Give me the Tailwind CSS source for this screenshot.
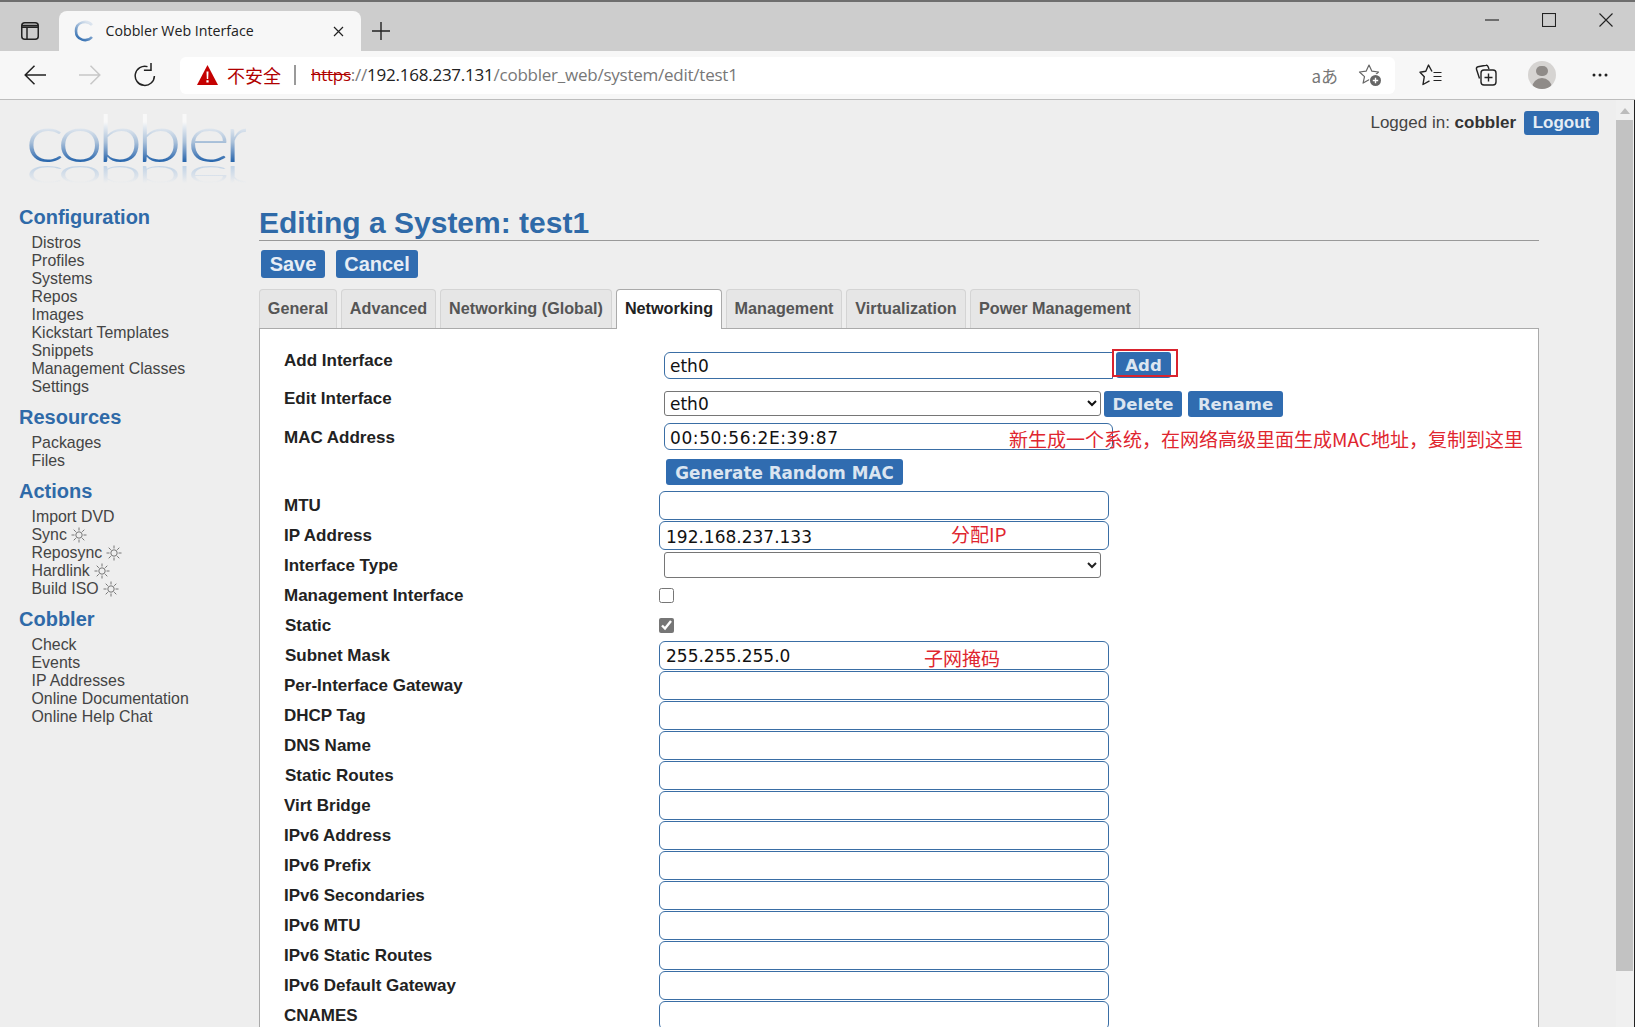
<!DOCTYPE html>
<html lang="en">
<head>
<meta charset="utf-8">
<title>Cobbler Web Interface</title>
<script src="https://cdn.jsdelivr.net/npm/@tailwindcss/browser@4"></script>
</head>
<body class="m-0 overflow-hidden font-['Liberation_Sans',sans-serif]">
<div class="relative flex h-[1027px] w-[1635px] flex-col overflow-hidden bg-[#eeeeee]">

  <!-- tab strip -->
  <div class="flex h-[51px] shrink-0 items-end border-t-2 border-[#6e6e6e] bg-[#cdcdcd] pl-[20px]">
    <div class="flex h-[40px] w-[38.5px] items-start pt-[10px]">
      <svg width="20" height="20" viewBox="0 0 20 20" fill="none" stroke="#222" stroke-width="1.5"><rect x="1.75" y="1.75" width="16.5" height="16.5" rx="3"/><path d="M2 4.5h16M2 6.2h16" stroke-width="1.6"/><path d="M7 6v12"/></svg>
    </div>
    <div class="flex h-[40px] w-[302px] items-center rounded-t-[8px] bg-[#f7f7f7] pl-[14px] pr-[17px] font-['Open_Sans',sans-serif] text-[14.200px] text-[#222]">
      <svg class="mr-[11px]" width="22" height="22" viewBox="0 0 22 22" fill="none"><defs><linearGradient id="fav" x1="0.7" y1="0" x2="0.2" y2="1"><stop offset="0" stop-color="#dbe4ee"/><stop offset="1" stop-color="#2f6cb0"/></linearGradient></defs><path d="M19 5C14 -0.5 3 1.500 3 11s11 11.500 16 6" stroke="url(#fav)" stroke-width="2.600"/></svg>
      <span class="flex-1 truncate">Cobbler Web Interface</span>
      <svg width="11" height="11" viewBox="0 0 11 11" stroke="#222" stroke-width="1.2"><path d="M1 1l9 9M10 1l-9 9"/></svg>
    </div>
    <div class="flex h-[40px] w-[40px] items-center justify-center pb-[1px]">
      <svg width="18" height="18" viewBox="0 0 18 18" stroke="#222" stroke-width="1.4"><path d="M9 0v18M0 9h18"/></svg>
    </div>
    <div class="flex h-[49px] flex-1 items-start justify-end self-start">
      <div class="flex h-[36px] w-[57px] items-center justify-center"><svg width="14" height="14" viewBox="0 0 14 14" stroke="#222" stroke-width="1.1"><path d="M0 7h14"/></svg></div>
      <div class="flex h-[36px] w-[57px] items-center justify-center"><svg width="14" height="14" viewBox="0 0 14 14" fill="none" stroke="#222" stroke-width="1.1"><rect x=".5" y=".5" width="13" height="13"/></svg></div>
      <div class="flex h-[36px] w-[58px] items-center justify-center"><svg width="14" height="14" viewBox="0 0 14 14" stroke="#222" stroke-width="1.1"><path d="M.5.5l13 13M13.5.5l-13 13"/></svg></div>
    </div>
  </div>

  <!-- toolbar -->
  <div class="flex h-[49px] shrink-0 items-center border-b border-[#bdbdbd] bg-[#f7f7f7]">
    <div class="flex w-[180px] items-center pl-[24px]">
      <svg class="mr-[33px]" width="22" height="20" viewBox="0 0 22 20" fill="none" stroke="#222" stroke-width="1.5"><path d="M22 10H1.2M10.5 .8L1.2 10l9.3 9.2"/></svg>
      <svg class="mr-[33px]" width="22" height="20" viewBox="0 0 22 20" fill="none" stroke="#c8c8c8" stroke-width="1.5"><path d="M0 10h20.8M11.5 .8l9.3 9.2-9.3 9.2"/></svg>
      <svg width="22" height="24" viewBox="0 0 22 24" fill="none" stroke="#222" stroke-width="1.5"><path d="M13.500 3.600A9.600 9.600 0 1 0 20.400 13"/><path d="M17 -.2v7.500H9.900"/></svg>
    </div>
    <div class="flex h-[37px] w-[1215px] items-center rounded-[6px] bg-white pl-[17px] pr-[13px]">
      <svg width="21" height="20" viewBox="0 0 21 20"><path d="M10.500 0L21 20H0z" fill="#c40000"/><path d="M9.500 6.500h2l-.3 7.500h-1.400zM9.400 15.300h2.200v2.200H9.400z" fill="#fff"/></svg>
      <span class="ml-[9px] font-['Noto_Sans_CJK_SC',sans-serif] text-[18px] text-[#b00000]">不安全</span>
      <span class="ml-[13px] h-[20px] w-[2px] bg-[#9a9a9a]"></span>
      <span class="ml-[15px] whitespace-nowrap font-['Open_Sans',sans-serif] text-[17px] tracking-[-0.24px] text-[#777]"><span class="text-[#b00000] line-through">https</span>://<span class="text-[#222]">192.168.237.131</span>/cobbler_web/system/edit/test1</span>
      <span class="flex-1"></span>
      <span class="mr-[20px] font-['Noto_Sans_CJK_SC',sans-serif] text-[17px] leading-none text-[#777]">aあ</span>
      <svg width="24" height="24" viewBox="0 0 24 24" fill="none"><path d="M11 2l2.900 6.200 6.600.8-5 4.600 1.400 6.500L11 16.800l-5.900 3.300 1.400-6.500L1.500 9l6.600-.8z" stroke="#666" stroke-width="1.200" stroke-linejoin="round"/><circle cx="17.500" cy="17.500" r="6.500" fill="#fff"/><circle cx="17.500" cy="17.500" r="5.500" fill="#666"/><path d="M17.500 14.800v5.400M14.800 17.500h5.400" stroke="#fff" stroke-width="1.400"/></svg>
    </div>
    <div class="flex flex-1 items-center pl-[24px]">
      <svg class="mr-[31px]" width="24" height="24" viewBox="0 0 24 24" fill="none" stroke="#222" stroke-width="1.400" stroke-linejoin="round"><path d="M13 8.500L9.500 2 6.800 8.300 1 9.200l4.300 4.500L4 21.500l6.500-3.600"/><path d="M14.500 9.500h8M14.500 13.500h8M14.500 17.500h8" stroke-width="1.200"/></svg>
      <svg class="mr-[30px]" width="24" height="24" viewBox="0 0 24 24" fill="none" stroke="#222" stroke-width="1.400"><path d="M15 6l-1-2.500Q13.400 2 12 2.300L4 3.800Q2 4.300 2.500 6.300L5.500 15.500"/><rect x="7" y="7" width="15" height="15" rx="3"/><path d="M14.500 10.500v8M10.500 14.500h8"/></svg>
      <div class="mr-[36px] flex h-[28px] w-[28px] flex-col items-center overflow-hidden rounded-full bg-[#d6d4d2]">
        <span class="mt-[5px] h-[12px] w-[12px] rounded-full bg-[#8f8b88]"></span>
        <span class="mt-[2px] h-[14px] w-[20px] rounded-t-full bg-[#8f8b88]"></span>
      </div>
      <svg width="16" height="4" viewBox="0 0 16 4" fill="#222"><circle cx="2" cy="2" r="1.500"/><circle cx="8" cy="2" r="1.500"/><circle cx="14" cy="2" r="1.500"/></svg>
    </div>
  </div>

  <!-- page -->
  <div class="flex min-h-0 flex-1">
    <aside class="w-[259px] shrink-0 text-[15.900px] leading-[18px] text-[#444]">
      <div class="relative h-[105px] overflow-hidden">
        <div class="absolute left-[25px] top-[-3px] origin-top-left scale-x-[1.25] whitespace-nowrap bg-linear-to-t from-[#2a68ad] from-18% via-[#a9c0d9] via-42% to-[#f8f8f8] to-68% bg-clip-text font-['Lato',sans-serif] text-[67px] font-light leading-[78px] tracking-[-5.500px] text-transparent">cobbler</div>
        <div class="absolute left-[25px] top-[98px] origin-top-left scale-x-[1.25] scale-y-[-0.5] whitespace-nowrap bg-linear-to-t from-[#c3d4e6] from-20% to-[#eeeeee] to-62% bg-clip-text font-['Lato',sans-serif] text-[67px] font-light leading-[78px] tracking-[-5.500px] text-transparent">cobbler</div>
      </div>
      <div class="pl-[19px]">
        <h2 class="mb-[5px] text-[20px] font-bold leading-[24px] text-[#2f6aa8]">Configuration</h2>
        <ul class="pl-[12.500px]">
          <li>Distros</li><li>Profiles</li><li>Systems</li><li>Repos</li><li>Images</li><li>Kickstart Templates</li><li>Snippets</li><li>Management Classes</li><li>Settings</li>
        </ul>
        <h2 class="mb-[5px] mt-[9px] text-[20px] font-bold leading-[24px] text-[#2f6aa8]">Resources</h2>
        <ul class="pl-[12.500px]"><li>Packages</li><li>Files</li></ul>
        <h2 class="mb-[5px] mt-[9px] text-[20px] font-bold leading-[24px] text-[#2f6aa8]">Actions</h2>
        <ul class="pl-[12.500px]">
          <li>Import DVD</li>
          <li class="flex items-center gap-[4px]">Sync <svg width="16" height="16" viewBox="0 0 16 16" fill="none" stroke="#666" stroke-width=".9"><circle cx="8" cy="8" r="3.200"/><path d="M8 .5v3M8 12.500v3M.5 8h3M12.500 8h3M2.700 2.700l2.100 2.100M11.200 11.200l2.100 2.100M13.300 2.700l-2.100 2.100M4.800 11.200l-2.100 2.100"/></svg></li>
          <li class="flex items-center gap-[4px]">Reposync <svg width="16" height="16" viewBox="0 0 16 16" fill="none" stroke="#666" stroke-width=".9"><circle cx="8" cy="8" r="3.200"/><path d="M8 .5v3M8 12.500v3M.5 8h3M12.500 8h3M2.700 2.700l2.100 2.100M11.200 11.200l2.100 2.100M13.300 2.700l-2.100 2.100M4.800 11.200l-2.100 2.100"/></svg></li>
          <li class="flex items-center gap-[4px]">Hardlink <svg width="16" height="16" viewBox="0 0 16 16" fill="none" stroke="#666" stroke-width=".9"><circle cx="8" cy="8" r="3.200"/><path d="M8 .5v3M8 12.500v3M.5 8h3M12.500 8h3M2.700 2.700l2.100 2.100M11.200 11.200l2.100 2.100M13.300 2.700l-2.100 2.100M4.800 11.200l-2.100 2.100"/></svg></li>
          <li class="flex items-center gap-[4px]">Build ISO <svg width="16" height="16" viewBox="0 0 16 16" fill="none" stroke="#666" stroke-width=".9"><circle cx="8" cy="8" r="3.200"/><path d="M8 .5v3M8 12.500v3M.5 8h3M12.500 8h3M2.700 2.700l2.100 2.100M11.200 11.200l2.100 2.100M13.300 2.700l-2.100 2.100M4.800 11.200l-2.100 2.100"/></svg></li>
        </ul>
        <h2 class="mb-[5px] mt-[9px] text-[20px] font-bold leading-[24px] text-[#2f6aa8]">Cobbler</h2>
        <ul class="pl-[12.500px]"><li>Check</li><li>Events</li><li>IP Addresses</li><li>Online Documentation</li><li>Online Help Chat</li></ul>
      </div>
    </aside>

    <main class="min-w-0 flex-1">
      <div class="flex h-[35px] items-end justify-end pr-[17px] text-[17px] leading-[24px] text-[#444]">
        <span>Logged in: <b class="text-[#333]">cobbler</b></span>
        <span class="ml-[8px] flex h-[24px] w-[75px] items-center justify-center rounded-[3px] bg-[#306cb0] text-[17px] font-bold text-[#e6edf5]">Logout</span>
      </div>
      <div class="mr-[77px]">
        <h1 class="mt-[70px] flex h-[36px] items-center border-b border-[#999] text-[30px] font-bold leading-[36px] text-[#2f6aa8]">Editing a System: test1</h1>
        <div class="ml-[2px] mt-[9px] flex gap-[11px] text-[20px] font-bold leading-none text-[#e6edf5]">
          <span class="flex h-[28px] w-[64px] items-center justify-center rounded-[3px] bg-[#306cb0]">Save</span>
          <span class="flex h-[28px] w-[82px] items-center justify-center rounded-[3px] bg-[#306cb0]">Cancel</span>
        </div>
        <div class="mt-[11px] flex h-[39px] gap-[4px] text-[16.200px] font-bold text-[#555]">
          <span class="flex w-[78px] items-center justify-center rounded-t-[4px] border border-b-0 border-[#d4d4d4] bg-[#e6e6e6] pb-[2px]">General</span>
          <span class="flex w-[95px] items-center justify-center rounded-t-[4px] border border-b-0 border-[#d4d4d4] bg-[#e6e6e6] pb-[2px]">Advanced</span>
          <span class="flex w-[172px] items-center justify-center rounded-t-[4px] border border-b-0 border-[#d4d4d4] bg-[#e6e6e6] pb-[2px]">Networking (Global)</span>
          <span class="z-10 -mb-px flex w-[106px] items-center justify-center rounded-t-[4px] border border-b-0 border-[#aaa] bg-white pb-[3px] text-[#222]">Networking</span>
          <span class="flex w-[116px] items-center justify-center rounded-t-[4px] border border-b-0 border-[#d4d4d4] bg-[#e6e6e6] pb-[2px]">Management</span>
          <span class="flex w-[120px] items-center justify-center rounded-t-[4px] border border-b-0 border-[#d4d4d4] bg-[#e6e6e6] pb-[2px]">Virtualization</span>
          <span class="flex w-[170px] items-center justify-center rounded-t-[4px] border border-b-0 border-[#d4d4d4] bg-[#e6e6e6] pb-[2px]">Power Management</span>
        </div>
        <div class="h-[800px] border border-[#aaa] bg-white pl-[24px] pt-[23px] text-[17px] font-bold text-[#222]">
          <div class="flex h-[39px] items-start">
            <label class="-mt-[3px] w-[380px] leading-[24px]">Add Interface</label>
            <input class="h-[27px] w-[449px] rounded-l-[6px] border border-[#3a6ea5] px-[5px] font-['DejaVu_Sans',sans-serif] text-[17px] font-normal text-[#111]" value="eth0">
            <span class="ml-[3px] flex h-[26px] w-[55px] items-center justify-center rounded-[3px] bg-[#306cb0] pt-[3px] font-['DejaVu_Sans',sans-serif] text-[16.500px] text-[#dbe5f0]">Add</span>
          </div>
          <div class="flex h-[32px] items-start">
            <label class="-mt-[4px] w-[380px] leading-[24px]">Edit Interface</label>
            <select class="h-[25px] w-[437px] rounded-[3px] border border-[#767676] bg-white pl-[1px] font-['DejaVu_Sans',sans-serif] text-[17px] font-normal text-[#111]"><option>eth0</option></select>
            <span class="ml-[3px] flex h-[26px] w-[78px] items-center justify-center rounded-[3px] bg-[#306cb0] pt-[2px] font-['DejaVu_Sans',sans-serif] text-[16.500px] text-[#dbe5f0]">Delete</span>
            <span class="ml-[6px] flex h-[26px] w-[95px] items-center justify-center rounded-[3px] bg-[#306cb0] pt-[2px] font-['DejaVu_Sans',sans-serif] text-[16.500px] text-[#dbe5f0]">Rename</span>
          </div>
          <div class="flex h-[36px] items-start">
            <label class="mt-[3px] w-[380px] leading-[24px]">MAC Address</label>
            <input class="h-[27px] w-[449px] rounded-[6px] border border-[#3a6ea5] px-[5px] pt-[2px] font-['DejaVu_Sans',sans-serif] text-[17px] font-normal tracking-[0.6px] text-[#111]" value="00:50:56:2E:39:87">
          </div>
          <div class="flex h-[31px] items-start pl-[382px]">
            <span class="flex h-[26px] w-[237px] items-center justify-center rounded-[3px] bg-[#306cb0] pt-[4px] font-['DejaVu_Sans',sans-serif] text-[16.800px] text-[#dbe5f0]">Generate Random MAC</span>
          </div>
          <div class="flex h-[30px] items-center"><label class="w-[375px] pt-[2px]">MTU</label><input class="h-[29px] w-[450px] rounded-[6px] border border-[#3a6ea5] px-[6px]"></div>
          <div class="flex h-[30px] items-center"><label class="w-[375px] pt-[2px]">IP Address</label><input class="h-[29px] w-[450px] rounded-[6px] border border-[#3a6ea5] px-[6px] pt-[3px] font-['DejaVu_Sans',sans-serif] text-[17px] font-normal text-[#111]" value="192.168.237.133"></div>
          <div class="flex h-[30px] items-center"><label class="w-[380px] pt-[2px]">Interface Type</label><select class="h-[26px] w-[437px] rounded-[3px] border border-[#767676] bg-white"><option></option></select></div>
          <div class="flex h-[30px] items-center"><label class="w-[375px] pt-[2px]">Management Interface</label><input type="checkbox" class="size-[15px]"></div>
          <div class="flex h-[30px] items-center"><label class="ml-px w-[374px] pt-[2px]">Static</label><input type="checkbox" checked class="size-[15px] accent-[#767676]"></div>
          <div class="flex h-[30px] items-center"><label class="ml-px w-[374px] pt-[2px]">Subnet Mask</label><input class="h-[29px] w-[450px] rounded-[6px] border border-[#3a6ea5] px-[6px] pt-[2px] font-['DejaVu_Sans',sans-serif] text-[17px] font-normal text-[#111]" value="255.255.255.0"></div>
          <div class="flex h-[30px] items-center"><label class="w-[375px] pt-[2px]">Per-Interface Gateway</label><input class="h-[29px] w-[450px] rounded-[6px] border border-[#3a6ea5]"></div>
          <div class="flex h-[30px] items-center"><label class="w-[375px] pt-[2px]">DHCP Tag</label><input class="h-[29px] w-[450px] rounded-[6px] border border-[#3a6ea5]"></div>
          <div class="flex h-[30px] items-center"><label class="w-[375px] pt-[2px]">DNS Name</label><input class="h-[29px] w-[450px] rounded-[6px] border border-[#3a6ea5]"></div>
          <div class="flex h-[30px] items-center"><label class="ml-px w-[374px] pt-[2px]">Static Routes</label><input class="h-[29px] w-[450px] rounded-[6px] border border-[#3a6ea5]"></div>
          <div class="flex h-[30px] items-center"><label class="w-[375px] pt-[2px]">Virt Bridge</label><input class="h-[29px] w-[450px] rounded-[6px] border border-[#3a6ea5]"></div>
          <div class="flex h-[30px] items-center"><label class="w-[375px] pt-[2px]">IPv6 Address</label><input class="h-[29px] w-[450px] rounded-[6px] border border-[#3a6ea5]"></div>
          <div class="flex h-[30px] items-center"><label class="w-[375px] pt-[2px]">IPv6 Prefix</label><input class="h-[29px] w-[450px] rounded-[6px] border border-[#3a6ea5]"></div>
          <div class="flex h-[30px] items-center"><label class="w-[375px] pt-[2px]">IPv6 Secondaries</label><input class="h-[29px] w-[450px] rounded-[6px] border border-[#3a6ea5]"></div>
          <div class="flex h-[30px] items-center"><label class="w-[375px] pt-[2px]">IPv6 MTU</label><input class="h-[29px] w-[450px] rounded-[6px] border border-[#3a6ea5]"></div>
          <div class="flex h-[30px] items-center"><label class="w-[375px] pt-[2px]">IPv6 Static Routes</label><input class="h-[29px] w-[450px] rounded-[6px] border border-[#3a6ea5]"></div>
          <div class="flex h-[30px] items-center"><label class="w-[375px] pt-[2px]">IPv6 Default Gateway</label><input class="h-[29px] w-[450px] rounded-[6px] border border-[#3a6ea5]"></div>
          <div class="flex h-[30px] items-center"><label class="w-[375px] pt-[2px]">CNAMES</label><input class="h-[29px] w-[450px] rounded-[6px] border border-[#3a6ea5]"></div>
        </div>
      </div>
    </main>

    <!-- scrollbar -->
    <div class="flex w-[19px] shrink-0 flex-col items-start border-r border-[#222] bg-[#f0f0f0]">
      <svg class="ml-[4px] mt-[8px]" width="10" height="6" viewBox="0 0 10 6" fill="#bcbcbc"><path d="M5 0l5 6H0z"/></svg>
      <div class="mt-[6px] h-[851px] w-[17px] bg-[#c2c2c2]"></div>
    </div>
  </div>

  <!-- annotations on the screenshot -->
  <div class="absolute left-[1112px] top-[349px] h-[28px] w-[66px] border-2 border-[#d9232e]"></div>
  <div class="absolute left-[1009px] top-[425px] whitespace-nowrap font-['Noto_Sans_CJK_SC',sans-serif] text-[19px] leading-[28px] text-[#e0262f]">新生成一个系统，在网络高级里面生成MAC地址，复制到这里</div>
  <div class="absolute left-[951px] top-[520px] whitespace-nowrap font-['Noto_Sans_CJK_SC',sans-serif] text-[19px] leading-[28px] text-[#e0262f]">分配IP</div>
  <div class="absolute left-[924px] top-[644px] whitespace-nowrap font-['Noto_Sans_CJK_SC',sans-serif] text-[19px] leading-[28px] text-[#e0262f]">子网掩码</div>
</div>
</body>
</html>
